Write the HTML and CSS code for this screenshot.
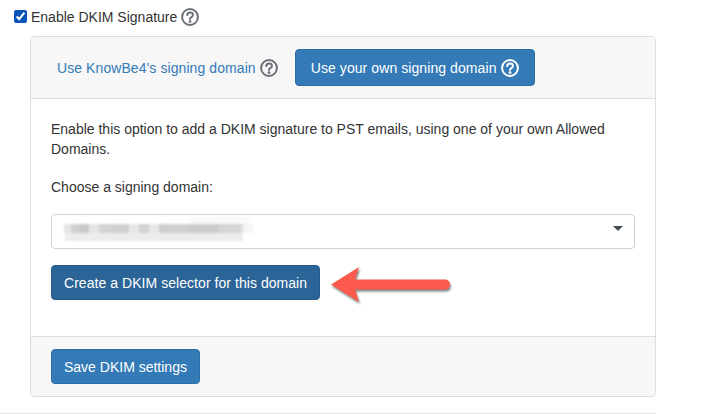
FILE: index.html
```html
<!DOCTYPE html>
<html lang="en">

<head>
    <meta charset="UTF-8">
    <meta name="viewport" content="width=device-width, initial-scale=1.0">
    <title>DKIM Settings</title>
    <link rel="stylesheet" href="styles.css">
</head>

<body>
    <div class="page">
        <label class="enable-row">
            <input type="checkbox" class="enable-check" checked>
            <span>Enable DKIM Signature</span>
            <svg class="help help-grey" viewBox="0 0 18 18" aria-hidden="true">
                <circle cx="9" cy="9" r="7.9" />
                <path d="M6.2 7.1C6.3 5.4 7.5 4.5 9.1 4.5C10.7 4.5 11.9 5.5 11.9 6.9C11.9 8 11.3 8.6 10.3 9.2C9.4 9.7 9 10.1 9 11" />
                <circle class="help-dot" cx="9" cy="13.6" r="1.4" />
            </svg>
        </label>

        <div class="panel">
            <div class="panel-head">
                <a class="tab-link" href="#">Use KnowBe4's signing domain
                    <svg class="help help-grey" viewBox="0 0 18 18" aria-hidden="true">
                        <circle cx="9" cy="9" r="7.9" />
                        <path d="M6.2 7.1C6.3 5.4 7.5 4.5 9.1 4.5C10.7 4.5 11.9 5.5 11.9 6.9C11.9 8 11.3 8.6 10.3 9.2C9.4 9.7 9 10.1 9 11" />
                        <circle class="help-dot" cx="9" cy="13.6" r="1.4" />
                    </svg>
                </a>
                <button class="btn btn-tab" type="button">Use your own signing domain
                    <svg class="help help-white" viewBox="0 0 18 18" aria-hidden="true">
                        <circle cx="9" cy="9" r="7.9" />
                        <path d="M6.2 7.1C6.3 5.4 7.5 4.5 9.1 4.5C10.7 4.5 11.9 5.5 11.9 6.9C11.9 8 11.3 8.6 10.3 9.2C9.4 9.7 9 10.1 9 11" />
                        <circle class="help-dot" cx="9" cy="13.6" r="1.4" />
                    </svg>
                </button>
            </div>

            <div class="panel-body">
                <p class="intro">Enable this option to add a DKIM signature to PST emails, using one of your own Allowed Domains.</p>
                <p class="choose">Choose a signing domain:</p>

                <div class="select-box">
                    <!-- pixelated block over the domain name -->
                    <svg class="redacted" width="192" height="26" viewBox="0 0 192 26" aria-hidden="true">
                        <rect x="125" y="1" width="62" height="7" fill="#f9f9f9" />
                        <rect x="0" y="8" width="180" height="9" fill="#e6e6e7" />
                        <rect x="180" y="8" width="9" height="9" fill="#f6f6f6" />
                        <rect x="1" y="17" width="178" height="8" fill="#ececed" />
                        <rect x="7" y="8" width="8" height="9" fill="#cfd0d2" />
                        <rect x="15" y="8" width="10" height="9" fill="#c8c9cb" />
                        <rect x="35" y="8" width="12" height="9" fill="#d3d4d5" />
                        <rect x="47" y="8" width="18" height="9" fill="#cfd0d2" />
                        <rect x="75" y="8" width="10" height="9" fill="#d0d1d3" />
                        <rect x="95" y="8" width="10" height="9" fill="#cccdcf" />
                        <rect x="105" y="8" width="20" height="9" fill="#cfd0d1" />
                        <rect x="125" y="8" width="30" height="9" fill="#cbcccd" />
                        <rect x="155" y="8" width="22" height="9" fill="#d4d5d6" />
                    </svg>
                    <span class="caret"></span>
                </div>

                <div class="create-row">
                    <button class="btn btn-dark" type="button">Create a DKIM selector for this domain</button>
                    <svg class="arrow" width="120" height="35" viewBox="0 0 120 35" aria-hidden="true">
                        <path d="M0 17.500L28 0L24 12.500H114C120.500 12.500 120.500 22.500 114 22.500H24L28 35Z" />
                    </svg>
                </div>
            </div>

            <div class="panel-foot">
                <button class="btn" type="button">Save DKIM settings</button>
            </div>
        </div>

        <hr class="rule">
    </div>
</body>

</html>
```

FILE: styles.css
```css
* {
    box-sizing: border-box;
}

body {
    margin: 0;
    font-family: "Liberation Sans", Arial, sans-serif;
    font-size: 14px;
    line-height: 20px;
    color: #333;
    background-color: #fff;
    overflow: hidden;
}

.page {
    width: 656px;
    height: 414px;
    display: flex;
    flex-direction: column;
}

.enable-row {
    display: flex;
    align-items: center;
    gap: 4px;
    height: 36px;
    padding: 0 0 3px 14px;
}

.enable-check {
    width: 13px;
    height: 13px;
    margin: 0;
    accent-color: #0b6cf2;
}

.help {
    width: 18px;
    height: 18px;
    flex: none;
    fill: none;
    stroke-width: 2;
    stroke-linecap: round;
}

.help-grey {
    stroke: #6c7178;
}

.help-white {
    stroke: #fff;
}

.help-grey .help-dot {
    fill: #6c7178;
    stroke: none;
}

.help-white .help-dot {
    fill: #fff;
    stroke: none;
}

.panel {
    margin-left: 30px;
    width: 626px;
    height: 361px;
    border: 1px solid #ddd;
    border-radius: 4px;
    display: flex;
    flex-direction: column;
}

.panel-head {
    height: 62px;
    padding: 12px 0 0 26px;
    display: flex;
    align-items: flex-start;
    gap: 17px;
    background-color: #f7f7f7;
    border-bottom: 1px solid #ddd;
    border-radius: 3px 3px 0 0;
}

.tab-link {
    display: flex;
    align-items: center;
    gap: 4px;
    height: 37px;
    color: #337ab7;
    text-decoration: none;
    letter-spacing: 0.08px;
    white-space: nowrap;
}

.btn {
    height: 35px;
    padding: 0 12px;
    border: 1px solid #2e6da4;
    border-radius: 4px;
    background-color: #337ab7;
    color: #fff;
    font: inherit;
    letter-spacing: 0;
    white-space: nowrap;
}

.btn-tab {
    display: flex;
    align-items: center;
    gap: 4px;
    width: 240px;
    height: 37px;
    padding: 0 15px;
    letter-spacing: 0.08px;
}

.btn-dark {
    background-color: #2b6496;
    border-color: #285a8a;
    letter-spacing: 0.05px;
}

.panel-body {
    flex: 1;
    padding: 20px 20px 0;
}

.intro {
    margin: 0 0 18px;
}

.choose {
    margin: 0 0 17px;
}

.select-box {
    position: relative;
    height: 35px;
    border: 1px solid #ccd2dd;
    border-radius: 4px;
    padding: 1px 0 0 12px;
}

.redacted {
    display: block;
    filter: blur(1px);
}

.caret {
    position: absolute;
    top: 11px;
    right: 11px;
    border-style: solid;
    border-width: 5px 5px 0;
    border-color: #444a52 transparent transparent;
}

.create-row {
    display: flex;
    align-items: flex-start;
    gap: 11px;
    margin-top: 16px;
}

.arrow {
    margin-top: 2px;
    overflow: visible;
    fill: #fb5a4d;
    filter: drop-shadow(1px 2px 1px rgba(60, 60, 60, 0.65));
}

.panel-foot {
    height: 60px;
    padding: 12px 20px 0;
    background-color: #f7f7f7;
    border-top: 1px solid #ddd;
    border-radius: 0 0 3px 3px;
}

.rule {
    margin: 16px 0 0;
    border: 0;
    border-top: 1px solid #e6e6e6;
}
```
